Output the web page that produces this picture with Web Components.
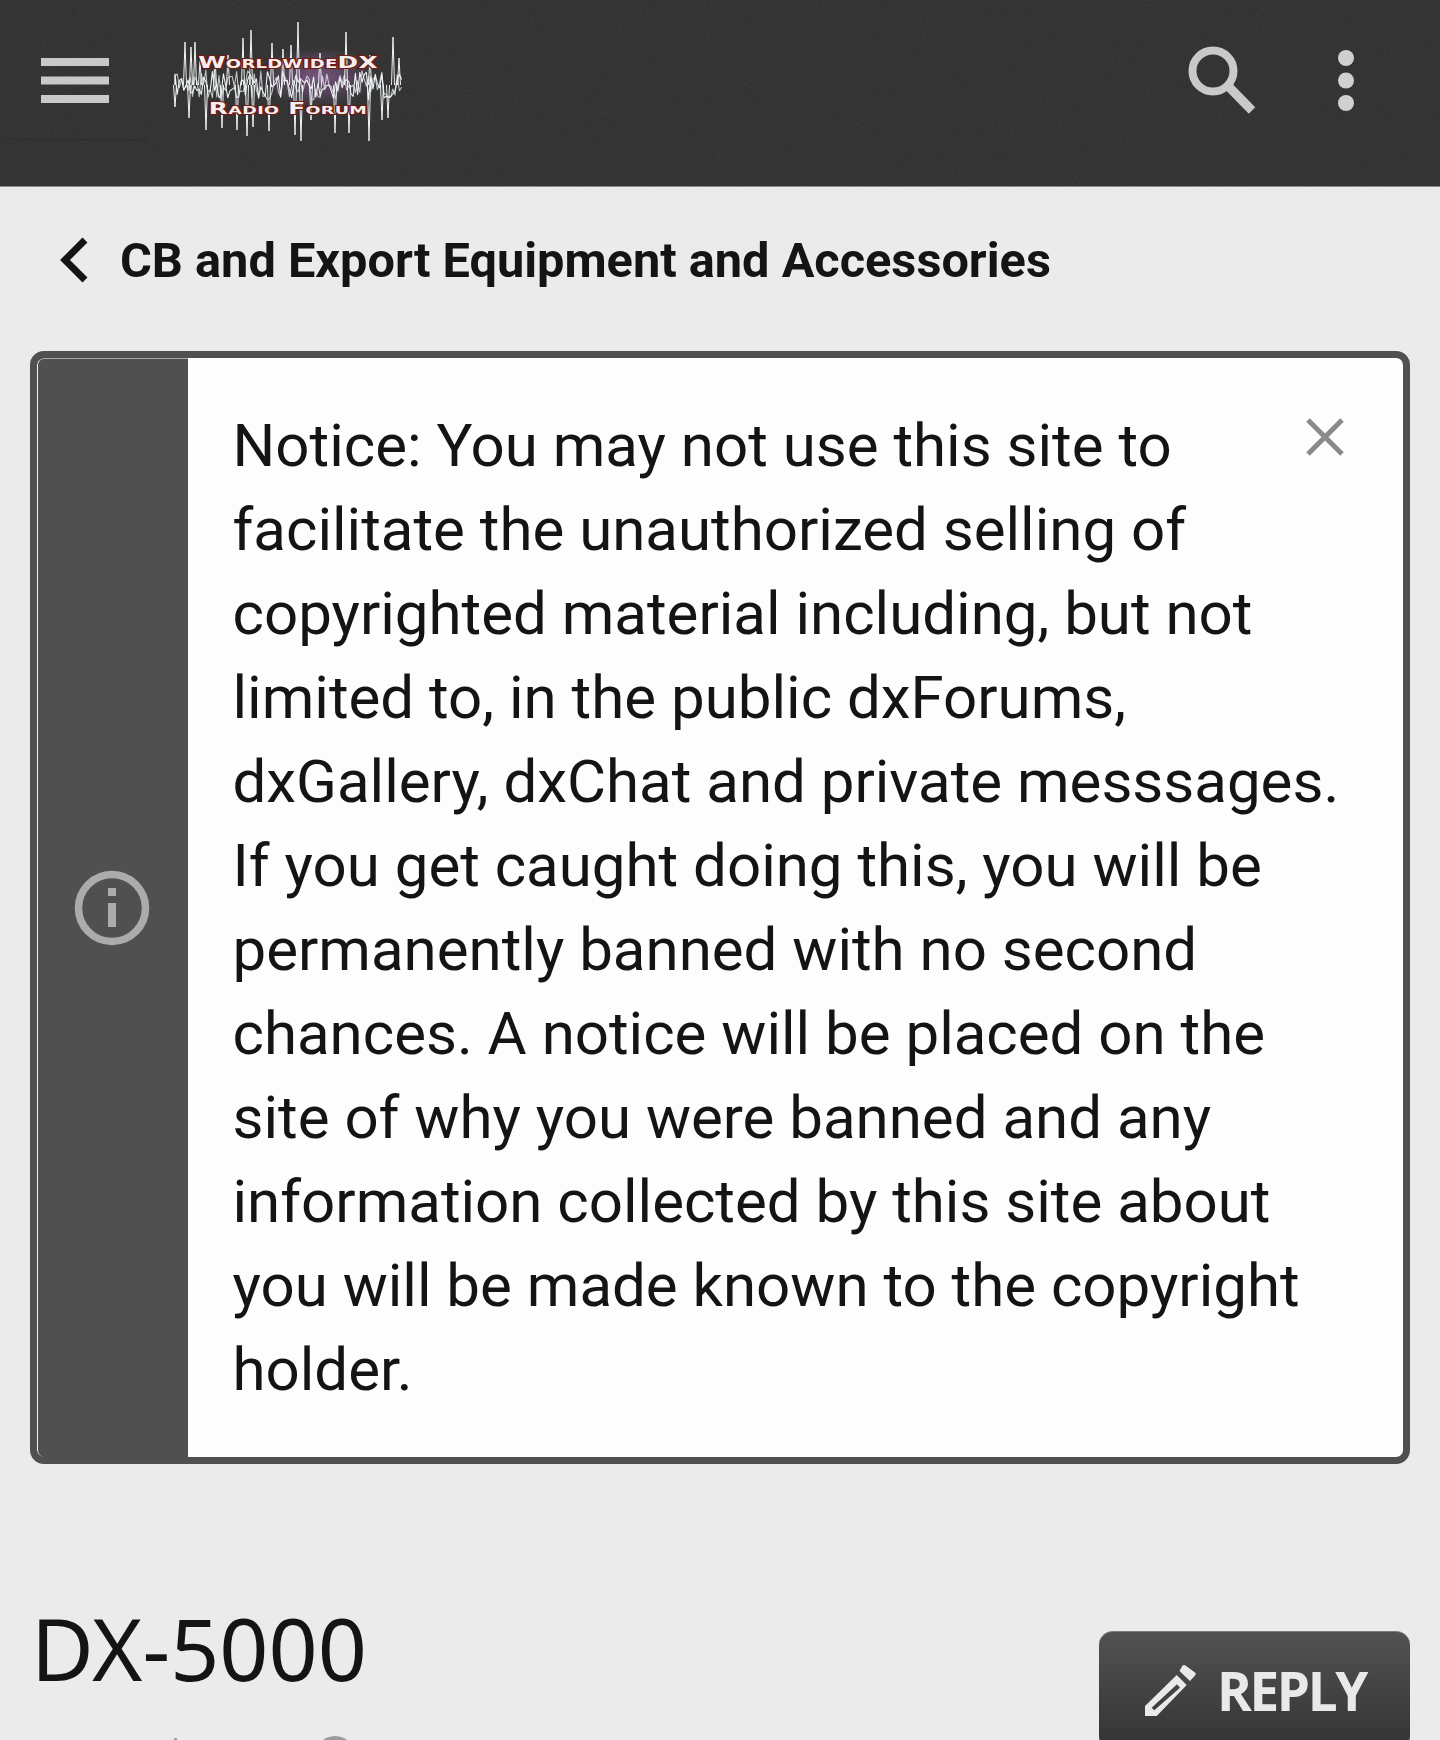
<!DOCTYPE html>
<html lang="en">
<head>
<meta charset="utf-8">
<title>DX-5000</title>
<style>
  html, body { margin: 0; padding: 0; background: #ebebeb; }
  body { width: 1440px; height: 1740px; overflow: hidden; color: #141414; font-family: Roboto, sans-serif; }
</style>
</head>
<body>
<wdx-header></wdx-header>
<wdx-crumb>CB and Export Equipment and Accessories</wdx-crumb>
<wdx-notice>Notice: You may not use this site to facilitate the unauthorized selling of copyrighted material including, but not limited to, in the public dxForums, dxGallery, dxChat and private messsages. If you get caught doing this, you will be permanently banned with no second chances. A notice will be placed on the site of why you were banned and any information collected by this site about you will be made known to the copyright holder.</wdx-notice>
<wdx-thread-head>
  DX-5000
  <wdx-reply slot="action">REPLY</wdx-reply>
</wdx-thread-head>

<script>
const logoTemplate = document.createElement('template');
logoTemplate.innerHTML = `
  <style>
    :host {
      display: block;
      position: relative;
      width: 240px;
      height: 130px;
    }
      svg {
        display: block;
        width: 100%;
        height: 100%;
        filter: blur(.35px);
      }
      .name {
        position: absolute;
        left: 0;
        width: 240px;
        text-align: center;
        font-family: "DejaVu Sans", sans-serif;
        font-weight: 700;
        font-variant: small-caps;
        white-space: nowrap;
        color: #f6eeee;
        -webkit-text-stroke: 2px #6e1a10;
        paint-order: stroke fill;
        transform-origin: 50% 50%;
      }
      .top {
        top: 38px;
        font-size: 16.5px;
        line-height: 20px;
        letter-spacing: .2px;
        transform: translateX(-2px) scaleX(1.5);
      }
      .bottom {
        top: 84px;
        font-size: 15.5px;
        line-height: 20px;
        letter-spacing: .2px;
        transform: translateX(-2px) scaleX(1.6);
      }
  </style>
  <svg viewBox="0 0 240 130" aria-hidden="true">
    <defs>
      <radialGradient id="glow">
        <stop offset="0" stop-color="#b070c0" stop-opacity=".55"/>
        <stop offset="1" stop-color="#b070c0" stop-opacity="0"/>
      </radialGradient>
    </defs>
    <ellipse cx="148" cy="62" rx="60" ry="30" fill="url(#glow)"/>
    <g id="wave" fill="none" stroke="#eef3f4" stroke-linejoin="round"></g>
  </svg>
  <div class="name top">WorldwideDX</div>
  <div class="name bottom">Radio Forum</div>
`;

class WdxLogo extends HTMLElement {
  constructor() {
    super();
    this.attachShadow({ mode: 'open' });
    this.shadowRoot.appendChild(logoTemplate.content.cloneNode(true));
    // spikes read off the reference, x / top or bottom, page coords minus 170,15
    const up = [[15,27],[21,32],[25,27],[30,45],[45,42],[58,40],[73,23],[81,15],[102,28],[113,34],[121,30],[128,7],[150,38],[176,17],[200,40],[223,22],[229,43]];
    const down = [[5,92],[19,103],[36,115],[52,113],[67,115],[77,121],[83,112],[99,116],[125,120],[131,126],[141,105],[165,118],[179,118],[199,126],[212,105],[218,103]];
    const wave = this.shadowRoot.getElementById('wave');
    let seed = 7;
    const rnd = () => {
      seed = (seed * 16807) % 2147483647;
      return seed / 2147483647;
    };
    let band = '';
    for (let layer = 0; layer < 2; layer++) {
      let d = 'M5 70';
      for (let x = 5; x < 232; x += 2.2) {
        d += ' L' + x.toFixed(1) + ' ' + (70 + (rnd() - .5) * (x < 14 || x > 222 ? 22 : 30)).toFixed(1);
      }
      band += '<path d="' + d + '" stroke-width="1.1" opacity="' + (layer ? .75 : 1) + '"/>';
    }
    let spikes = '';
    for (const [x, y] of up) spikes += '<path d="M' + (x - 1.5) + ' 70 L' + x + ' ' + y + ' L' + (x + 1.5) + ' 70" stroke-width="1"/>';
    for (const [x, y] of down) spikes += '<path d="M' + (x - 1.5) + ' 70 L' + x + ' ' + y + ' L' + (x + 1.5) + ' 70" stroke-width="1"/>';
    wave.innerHTML = band + spikes;
  }
}
window.customElements.define('wdx-logo', WdxLogo);

const headerTemplate = document.createElement('template');
headerTemplate.innerHTML = `
  <style>
    :host {
      display: flex;
      position: relative;
      box-sizing: border-box;
      height: 187px;
      align-items: center;
      padding: 0 0 0 41px;
      background: #2f2f2f;
      border-bottom: 1px solid #8c8c8c;
      overflow: hidden;
    }
      .grain {
        position: absolute;
        inset: 0;
        width: 100%;
        height: 100%;
        opacity: .08;
      }
      .shade {
        position: absolute;
        left: 2px;
        top: 0;
        width: 150px;
        height: 140px;
        box-sizing: border-box;
        border-bottom: 1px solid rgba(0,0,0,.12);
        border-radius: 0 0 10px 10px;
      }
      .burger, .search, .more, wdx-logo {
        position: relative;
        flex: none;
      }
      .burger {
        width: 68px;
        height: 45px;
        margin-bottom: 25px;
      }
      wdx-logo {
        margin: 0 0 26px 61px;
      }
      .search {
        width: 72px;
        height: 76px;
        margin: 0 0 18px auto;
      }
      .more {
        width: 16px;
        height: 61px;
        margin: 0 86px 25px 78px;
      }
  </style>
  <svg class="grain" aria-hidden="true">
    <filter id="noise"><feTurbulence type="fractalNoise" baseFrequency=".55" numOctaves="2" seed="4"/><feColorMatrix type="saturate" values="0"/></filter>
    <rect width="100%" height="100%" filter="url(#noise)"/>
  </svg>
  <div class="shade"></div>
  <svg class="burger" viewBox="0 0 68 45" aria-hidden="true">
    <path fill="#c9c9c9" d="M0 0h68v8H0zM0 18.500h68v8H0zM0 37h68v8H0z"/>
  </svg>
  <wdx-logo></wdx-logo>
  <svg class="search" viewBox="0 0 72 76" aria-hidden="true">
    <circle cx="25" cy="25" r="20.500" fill="none" stroke="#c9c9c9" stroke-width="8"/>
    <path d="M41 41 L64 64.500" fill="none" stroke="#c9c9c9" stroke-width="9"/>
  </svg>
  <svg class="more" viewBox="0 0 16 61" aria-hidden="true">
    <circle cx="8" cy="8" r="8" fill="#d0d0d0"/>
    <circle cx="8" cy="30.500" r="8" fill="#d0d0d0"/>
    <circle cx="8" cy="53" r="8" fill="#d0d0d0"/>
  </svg>
`;

class WdxHeader extends HTMLElement {
  constructor() {
    super();
    this.attachShadow({ mode: 'open' });
    this.shadowRoot.appendChild(headerTemplate.content.cloneNode(true));
  }
}
window.customElements.define('wdx-header', WdxHeader);

const crumbTemplate = document.createElement('template');
crumbTemplate.innerHTML = `
  <style>
    :host {
      display: flex;
      box-sizing: border-box;
      height: 164px;
      align-items: center;
      padding: 0 0 18px 60px;
      font-family: Roboto, sans-serif;
      font-weight: 700;
      font-size: 48.7px;
      color: #141414;
    }
      svg {
        flex: none;
        width: 28px;
        height: 46px;
        margin-right: 32px;
      }
  </style>
  <svg viewBox="0 0 28 46" aria-hidden="true">
    <path d="M25 3 L5 23 L25 43" fill="none" stroke="#141414" stroke-width="7"/>
  </svg>
  <slot></slot>
`;

class WdxCrumb extends HTMLElement {
  constructor() {
    super();
    this.attachShadow({ mode: 'open' });
    this.shadowRoot.appendChild(crumbTemplate.content.cloneNode(true));
  }
}
window.customElements.define('wdx-crumb', WdxCrumb);

const noticeTemplate = document.createElement('template');
noticeTemplate.innerHTML = `
  <style>
    :host {
      display: flex;
      position: relative;
      box-sizing: border-box;
      width: 1380px;
      margin-left: 30px;
      border: 7px solid #505050;
      border-radius: 14px;
      background: #505050;
      overflow: hidden;
    }
      .side {
        flex: none;
        display: flex;
        box-sizing: border-box;
        width: 151px;
        align-items: center;
        justify-content: center;
        padding-right: 2px;
        border-left: 1px solid #f4f4f4;
        border-top: 1px solid #a8a8a8;
        border-radius: 7px 0 0 7px;
        background: #505050;
      }
      .side svg {
        width: 76px;
        height: 76px;
      }
      .body {
        flex: 1;
        box-sizing: border-box;
        padding: 46px 50px 45px 44.5px;
        background: #fdfdfd;
        font-family: Roboto, sans-serif;
        font-size: 60px;
        line-height: 84px;
        color: #141414;
      }
      .close {
        position: absolute;
        right: 58px;
        top: 59px;
        width: 40px;
        height: 40px;
      }
  </style>
  <div class="side">
    <svg viewBox="0 0 76 76" aria-hidden="true">
      <circle cx="38" cy="38" r="33.500" fill="none" stroke="#ababab" stroke-width="7.500"/>
      <path fill="#ababab" d="M34 18h8v8h-8zM34 33h8v24h-8z"/>
    </svg>
  </div>
  <div class="body"><slot></slot></div>
  <svg class="close" viewBox="0 0 40 40" aria-hidden="true">
    <path d="M3 3 L37 37 M37 3 L3 37" fill="none" stroke="#8a8a8a" stroke-width="5"/>
  </svg>
`;

class WdxNotice extends HTMLElement {
  constructor() {
    super();
    this.attachShadow({ mode: 'open' });
    this.shadowRoot.appendChild(noticeTemplate.content.cloneNode(true));
  }
}
window.customElements.define('wdx-notice', WdxNotice);

const replyTemplate = document.createElement('template');
replyTemplate.innerHTML = `
  <style>
    :host {
      display: flex;
      box-sizing: border-box;
      width: 311px;
      height: 119px;
      align-items: center;
      gap: 21px;
      padding: 0 0 2px 46px;
      border-top: 1px solid #7c7c7c;
      border-radius: 14px;
      background: linear-gradient(#525252, #333);
      font-family: "Open Sans", sans-serif;
      font-weight: 700;
      font-size: 53px;
      letter-spacing: -2.400px;
      color: #e9e9e9;
    }
      svg {
        flex: none;
        width: 51px;
        height: 51px;
      }
  </style>
  <svg viewBox="0 0 51 51" aria-hidden="true">
    <path fill="#e9e9e9" d="M37.500 .500 Q39 -.500 40.500 .500 L50 7.500 Q51.500 9 50 10.500 L45 16 L34.500 6Z"/>
    <path fill="#e9e9e9" fill-rule="evenodd" d="M31.700 10 L41.700 20 L11.700 51 L0 51 L0 41Z M32 19.300 L6.700 42.700 L9.300 45.300 L35 22.700Z"/>
  </svg>
  <slot></slot>
`;

class WdxReply extends HTMLElement {
  constructor() {
    super();
    this.attachShadow({ mode: 'open' });
    this.shadowRoot.appendChild(replyTemplate.content.cloneNode(true));
  }
}
window.customElements.define('wdx-reply', WdxReply);

const headTemplate = document.createElement('template');
headTemplate.innerHTML = `
  <style>
    :host {
      display: flex;
      box-sizing: border-box;
      width: 1380px;
      margin: 125px 0 0 30px;
      justify-content: space-between;
      align-items: flex-start;
    }
      .left {
        display: flex;
        flex-direction: column;
      }
      h1 {
        margin: 0;
        padding-left: 1px;
        font-family: "Noto Sans", "Open Sans", sans-serif;
        font-weight: 400;
        font-size: 86px;
        line-height: 117px;
        color: #141414;
      }
      .meta {
        display: flex;
        align-items: flex-start;
        height: 40px;
      }
      .tick {
        width: 3px;
        height: 6px;
        margin: 32px 0 0 144px;
        background: #a0a0a0;
      }
      .clock {
        width: 40px;
        height: 40px;
        margin: 30px 0 0 138px;
        border-radius: 50%;
        background: #9a9a9a;
      }
      .action {
        margin-top: 42px;
      }
  </style>
  <div class="left">
    <h1><slot></slot></h1>
    <div class="meta"><span class="tick"></span><span class="clock"></span></div>
  </div>
  <div class="action"><slot name="action"></slot></div>
`;

class WdxThreadHead extends HTMLElement {
  constructor() {
    super();
    this.attachShadow({ mode: 'open' });
    this.shadowRoot.appendChild(headTemplate.content.cloneNode(true));
  }
}
window.customElements.define('wdx-thread-head', WdxThreadHead);
</script>
</body>
</html>
